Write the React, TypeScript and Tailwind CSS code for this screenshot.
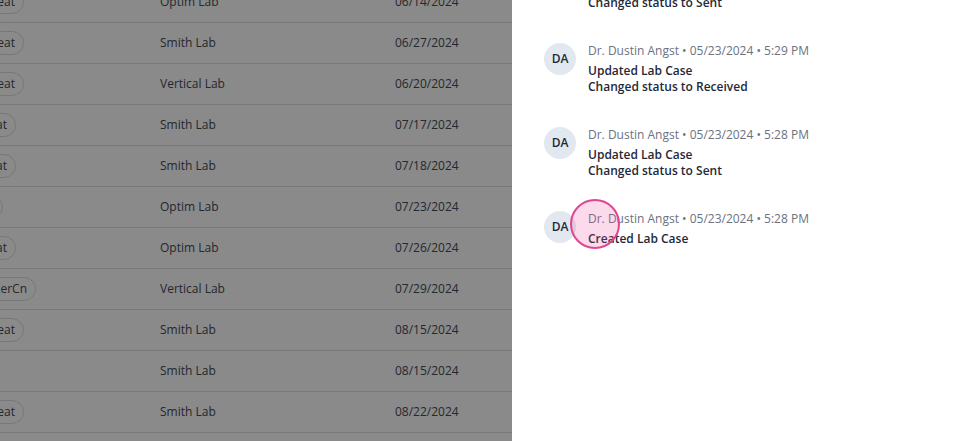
import React from "react";

const rows = [
  { pill: "Repeat", box: "w-[24px]", lab: "Optim Lab", date: "06/14/2024" },
  { pill: "Repeat", box: "w-[24px]", lab: "Smith Lab", date: "06/27/2024" },
  { pill: "Repeat", box: "w-[24px]", lab: "Vertical Lab", date: "06/20/2024" },
  { pill: "Flat", box: "w-[16px]", lab: "Smith Lab", date: "07/17/2024" },
  { pill: "Flat", box: "w-[16px]", lab: "Smith Lab", date: "07/18/2024" },
  { pill: "N", box: "w-[3px]", lab: "Optim Lab", date: "07/23/2024" },
  { pill: "Flat", box: "w-[16px]", lab: "Optim Lab", date: "07/26/2024" },
  { pill: "ZerCn", box: "w-[36px]", lab: "Vertical Lab", date: "07/29/2024" },
  { pill: "Repeat", box: "w-[24px]", lab: "Smith Lab", date: "08/15/2024" },
  { pill: "", box: "w-[0px]", lab: "Smith Lab", date: "08/15/2024" },
  { pill: "Repeat", box: "w-[24px]", lab: "Smith Lab", date: "08/22/2024" },
];

const entries = [
  { time: "5:30 PM", lines: ["Updated Lab Case", "Changed status to Sent"] },
  { time: "5:29 PM", lines: ["Updated Lab Case", "Changed status to Received"] },
  { time: "5:28 PM", lines: ["Updated Lab Case", "Changed status to Sent"] },
  { time: "5:28 PM", lines: ["Created Lab Case"] },
];

export default function App() {
  return (
    <div
      className="relative w-[960px] h-[441px] overflow-hidden flex bg-white"
      style={{ fontFamily: '"Open Sans", "Liberation Sans", sans-serif' }}
    >
      <div className="relative w-[512px] h-full overflow-hidden bg-white">
        <div className="flex flex-col mt-[-18px]">
          {rows.map((r, i) => (
            <div
              key={i}
              className="flex items-center h-[41px] border-b border-[#dcdce8] text-[12px] text-[#454a54]"
            >
              <div className="w-[160px] flex">
                <div className={r.box + " flex justify-end"}>
                  {r.pill !== "" && (
                    <span className="shrink-0 rounded-full border border-[#d8dce3] px-2 h-[24px] flex items-center text-[12px] text-[#454a54] whitespace-nowrap">
                      {r.pill}
                    </span>
                  )}
                </div>
              </div>
              <div className="w-[235px]">{r.lab}</div>
              <div>{r.date}</div>
            </div>
          ))}
        </div>
        <div className="absolute inset-0 bg-black/[0.46]" />
      </div>
      <div className="w-[448px] h-full bg-white shadow-[-6px_0_12px_rgba(0,0,0,0.15)] px-8">
        <div className="flex flex-col gap-[30px] mt-[-43px]">
          {entries.map((e, i) => (
            <div key={i} className="flex gap-3">
              <div className="w-8 h-8 mt-[2px] rounded-full bg-[#e2e8f0] flex items-center justify-center text-[12px] font-semibold text-[#1e293b] shrink-0">
                DA
              </div>
              <div className="flex flex-col">
                <div className="text-[12px] leading-5 text-[#6b7280] mb-[2px] whitespace-nowrap">
                  Dr. Dustin Angst • 05/23/2024 • {e.time}
                </div>
                {e.lines.map((l, j) => (
                  <div key={j} className="text-[12px] leading-4 font-semibold text-[#1f2937]">
                    {l}
                  </div>
                ))}
              </div>
            </div>
          ))}
        </div>
      </div>
      <div className="absolute left-[570px] top-[199px] w-[50px] h-[50px] rounded-full border-2 border-[#e0468f] bg-[#ec4899]/20" />
    </div>
  );
}
